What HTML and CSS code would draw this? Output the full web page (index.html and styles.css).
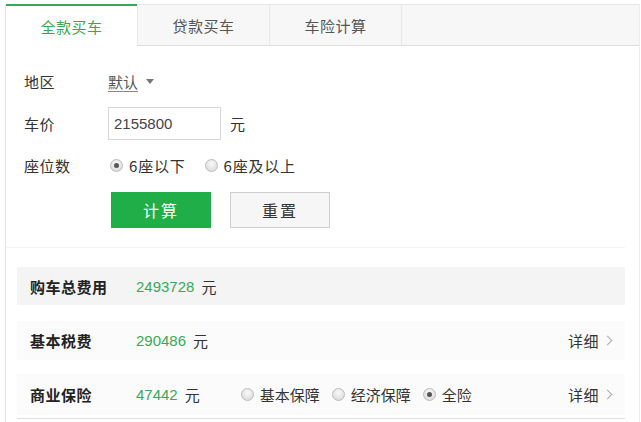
FILE: index.html
```html
<!DOCTYPE html>
<html lang="zh">
<head>
<meta charset="utf-8">
<link rel="stylesheet" href="styles.css">
</head>
<body>
<div class="panel">
  <div class="tabs">
    <div class="tab active">全款买车</div>
    <div class="tab">贷款买车</div>
    <div class="tab">车险计算</div>
    <div class="tab-fill"></div>
  </div>
  <div class="form">
    <div class="frow r-area">
      <span class="label">地区</span>
      <span class="select"><span class="ul">默认</span><span class="caret"></span></span>
    </div>
    <div class="frow r-price">
      <span class="label">车价</span>
      <span class="input">2155800</span>
      <span class="unit">元</span>
    </div>
    <div class="frow r-seat">
      <span class="label">座位数</span>
      <span class="radio checked"></span><span class="rtext">6座以下</span>
      <span class="radio"></span><span class="rtext">6座及以上</span>
    </div>
    <div class="frow r-btn">
      <span class="btn primary">计算</span>
      <span class="btn plain">重置</span>
    </div>
  </div>
  <div class="results">
    <div class="res dark">
      <span class="rlabel">购车总费用</span>
      <span class="num">2493728</span><span class="yuan">元</span>
    </div>
    <div class="res">
      <span class="rlabel">基本税费</span>
      <span class="num">290486</span><span class="yuan">元</span>
      <span class="more">详细<span class="chev"></span></span>
    </div>
    <div class="res last">
      <span class="rlabel">商业保险</span>
      <span class="num">47442</span><span class="yuan">元</span>
      <span class="opts">
        <span class="radio"></span><span class="otext">基本保障</span>
        <span class="radio"></span><span class="otext">经济保障</span>
        <span class="radio checked"></span><span class="otext">全险</span>
      </span>
      <span class="more">详细<span class="chev"></span></span>
    </div>
  </div>
</div>
</body>
</html>
```
FILE: styles.css
```css
* { box-sizing: border-box; }
html, body { margin: 0; padding: 0; background: #fff; }
body {
  font-family: "Noto Sans CJK SC", "Liberation Sans", sans-serif;
  color: #333;
  font-size: 15px;
}
.panel {
  margin: 4px 1px 0 5px;
  height: 418px;
  border-left: 1px solid #e2e2e2;
  border-right: 1px solid #ececec;
}
.tabs {
  display: flex;
  height: 42px;
}
.tab {
  width: 132px;
  display: flex;
  align-items: center;
  justify-content: center;
  background: #f7f7f7;
  border-top: 1px solid #e6e6e6;
  border-left: 1px solid #e8e8e8;
  border-bottom: 1px solid #dcdcdc;
  color: #555;
  font-size: 15px;
  letter-spacing: 0.5px;
}
.tab.active {
  width: 131px;
  background: #fff;
  border-top: 2px solid #39a85a;
  border-left: none;
  border-bottom: none;
  color: #34a853;
}
.tab-fill {
  flex: 1;
  background: #f7f7f7;
  border-top: 1px solid #e6e6e6;
  border-left: 1px solid #e8e8e8;
  border-bottom: 1px solid #dcdcdc;
}
.form {
  padding: 18px 0 0 18px;
  height: 202px;
  border-bottom: 1px solid #f3f3f3;
  margin: 0 14px 0 0;
}
.frow {
  display: flex;
  align-items: center;
}
.label {
  width: 84px;
  color: #333;
  letter-spacing: 0.5px;
}
.r-area { height: 34px; }
.select { display: flex; align-items: center; color: #555; }
.ul { text-decoration: underline; text-underline-offset: 3px; text-decoration-color: #888; }
.caret {
  width: 0; height: 0;
  margin-left: 8px;
  border-left: 4px solid transparent;
  border-right: 4px solid transparent;
  border-top: 5px solid #777;
}
.r-price { height: 34px; margin-top: 8px; }
.input {
  width: 113px;
  height: 33px;
  border: 1px solid #d8d8d8;
  padding-left: 5px;
  display: flex;
  align-items: center;
  font-family: "Liberation Sans", sans-serif;
  font-size: 15px;
  color: #444;
}
.unit { margin-left: 9px; }
.r-seat { height: 30px; margin-top: 10px; }
.radio {
  width: 13px;
  height: 13px;
  border-radius: 50%;
  border: 1px solid #bcbcbc;
  background: radial-gradient(circle at 50% 35%, #fafafa, #d4d4d4);
  display: inline-flex;
  align-items: center;
  justify-content: center;
  margin-left: 2px;
}
.radio.checked::after {
  content: "";
  width: 5px;
  height: 5px;
  border-radius: 50%;
  background: #555;
}
.rtext { margin-left: 6px; margin-right: 17px; font-size: 15px; letter-spacing: 0.8px; }
.r-btn { margin-top: 12px; padding-left: 87px; }
.btn {
  height: 36px;
  width: 100px;
  display: flex;
  align-items: center;
  justify-content: center;
  font-size: 16px;
  letter-spacing: 2px;
}
.btn.primary { background: #1fae48; color: #fff; }
.btn.plain {
  margin-left: 19px;
  background: #f6f6f6;
  border: 1px solid #cfcfcf;
  color: #333;
}
.results {
  margin: 19px 14px 0 11px;
  border-bottom: 1px solid #dedede;
}
.res {
  display: flex;
  align-items: center;
  height: 39px;
  padding: 0 10px 0 13px;
  background: #fbfbfb;
  margin-top: 16px;
}
.res.dark { background: #f4f4f4; margin-top: 0; height: 38px; }
.res.last { height: 41px; margin-top: 14px; margin-bottom: 3px; }
.rlabel {
  width: 106px;
  font-weight: bold;
  color: #222;
  letter-spacing: 0.5px;
}
.num {
  font-family: "Liberation Sans", sans-serif;
  color: #3aa858;
  font-size: 15px;
}
.yuan { margin-left: 7px; }
.opts {
  display: flex;
  align-items: center;
  margin-left: 41px;
}
.opts .radio { margin-left: 0; }
.otext { margin-left: 6px; margin-right: 12px; }
.more {
  margin-left: auto;
  display: flex;
  align-items: center;
  color: #333;
  letter-spacing: 0.5px;
}
.chev {
  width: 7px;
  height: 7px;
  border-top: 1.5px solid #aaa;
  border-right: 1.5px solid #aaa;
  transform: rotate(45deg);
  margin-left: 5px;
  margin-right: 4px;
}
```
